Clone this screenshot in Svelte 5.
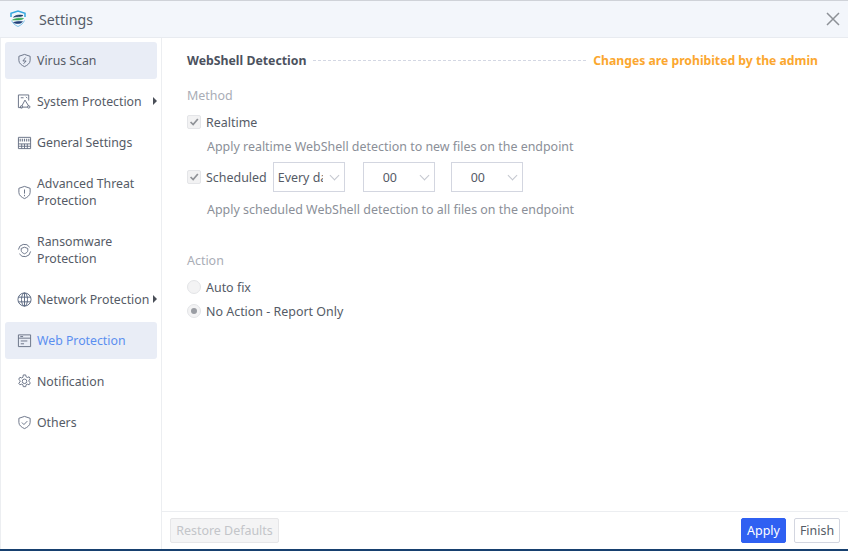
<script lang="ts">
  // Settings dialog, Web Protection page (read-only state)
  const hours = ['00', '00'];
</script>

<div class="win">
  <header class="title">
    <svg class="logo" width="20" height="20" viewBox="0 0 20 20" fill="none" aria-hidden="true">
      <path d="M3 8V4.200L10 2l7 2.200V8" stroke="#35a7e0" stroke-width="1.500" />
      <path d="M3.600 11.500c.8 2.600 3.400 4.700 6.400 6 3-1.300 5.600-3.400 6.400-6" stroke="#7cc4ea" stroke-width="1" />
      <path d="M5.500 8.200C7.500 6 12 5.600 15 6.500c-1.200 1.500-7 .8-9.500 1.700z" fill="#1d3c6a" stroke="#1d3c6a" stroke-width=".6" />
      <path d="M4.500 11c3-2 8.500-2.200 11-1.500-2 2.200-8 1.200-11 1.500z" fill="#35a852" stroke="#35a852" stroke-width=".6" />
      <path d="M5.500 13.500c2.500-1 6-1.200 9-.8-1.800 2.300-6.500 2.300-9 .8z" fill="#1f3f78" stroke="#1f3f78" stroke-width=".6" />
    </svg>
    <span class="title-text">Settings</span>
    <svg class="close" width="14" height="14" viewBox="0 0 14 14" aria-hidden="true">
      <path d="M1 1l12 12M13 1 1 13" stroke="#8d9197" stroke-width="1.500" fill="none" />
    </svg>
  </header>

  <div class="body">
    <nav class="side">
      <div class="item active">
        <svg class="ico" viewBox="0 0 16 16" fill="none"><path d="M8 1.500 14 3.500V8c0 3-3 5.200-6 6.500C5 13.200 2 11 2 8V3.500z" /><path d="M9.200 4.800 6.300 8.500h3.400L7 11.500" /></svg>
        <span>Virus Scan</span>
      </div>
      <div class="item">
        <svg class="ico" viewBox="0 0 16 16" fill="none"><path d="M5 14.500H1.500V1h11v6" /><path d="M4 4h3M9.500 3l1.500 1.500" /><path d="M8.500 6.500 5 13M8.500 6.500l4 6.500M6 14h5" /><circle cx="4.800" cy="13.800" r="1.300" /><circle cx="12.500" cy="13.800" r="1.300" /></svg>
        <span>System Protection</span>
        <i class="caret"></i>
      </div>
      <div class="item">
        <svg class="ico" viewBox="0 0 16 16" fill="none"><path d="M1.500 2.500h13v12h-13z" /><path d="M1.500 5.500h13" stroke-dasharray="1 1" stroke-width="3" /><path d="M1.500 9.500h13M5 9.500v5M8 9.500v5M11 9.500v5M1.500 12h13" /></svg>
        <span>General Settings</span>
      </div>
      <div class="item tall">
        <svg class="ico" viewBox="0 0 16 16" fill="none"><path d="M8 1.500 14 3.500V8c0 3-3 5.200-6 6.500C5 13.200 2 11 2 8V3.500z" /><path d="M8 4.800v4.400M8 10.500v1.500" /></svg>
        <span>Advanced Threat<br />Protection</span>
      </div>
      <div class="item tall">
        <svg class="ico" viewBox="0 0 16 16" fill="none"><path d="M1.500 7A6.500 6.500 0 0 1 13.500 4.500M14.500 9A6.500 6.500 0 0 1 2.500 11.500" /><path d="M8 4.500 11.500 5.800V8c0 1.700-1.700 2.800-3.500 3.500C6.200 10.800 4.500 9.700 4.500 8V5.800z" /></svg>
        <span>Ransomware<br />Protection</span>
      </div>
      <div class="item">
        <svg class="ico globe" viewBox="0 0 16 16" fill="none"><circle cx="8" cy="8" r="7" /><ellipse cx="8" cy="8" rx="3.200" ry="7" /><path d="M8 1v14M1.500 5.500h13M1.500 10.500h13" /></svg>
        <span>Network Protection</span>
        <i class="caret"></i>
      </div>
      <div class="item active on">
        <svg class="ico" viewBox="0 0 16 16" fill="none"><path d="M1.500 2h13v12.500h-13zM1.500 5.500h13" /><path d="M3.500 3.800h3M4 8.500h7M4 11.500h3.500" /></svg>
        <span>Web Protection</span>
      </div>
      <div class="item">
        <svg class="ico" viewBox="0 0 16 16" fill="none"><path d="M6.700 1h2.600l.4 2 1.300.7 1.900-.7 1.300 2.200-1.500 1.300v1.500l1.500 1.300-1.300 2.200-1.900-.7-1.300.7-.4 2H6.700l-.4-2-1.300-.7-1.900.7L1.800 9.800l1.500-1.300V7L1.800 5.700l1.300-2.200 1.900.7 1.300-.7z" /><circle cx="8" cy="7.800" r="2.400" /></svg>
        <span>Notification</span>
      </div>
      <div class="item">
        <svg class="ico" viewBox="0 0 16 16" fill="none"><path d="M8 1.500 14 3.500V8c0 3-3 5.200-6 6.500C5 13.200 2 11 2 8V3.500z" /><path d="M5.200 8l2.200 2.200L11 6.500" /></svg>
        <span>Others</span>
      </div>
    </nav>

    <main class="main">
      <div class="content">
        <div class="head">
          <h2>WebShell Detection</h2>
          <div class="dash"></div>
          <strong class="warn">Changes are prohibited by the admin</strong>
        </div>

        <div class="group-label method">Method</div>
        <div class="row">
          <span class="check"><svg viewBox="0 0 14 14" fill="none"><path d="M3 7l3 3 5.500-6.500" /></svg></span>
          <span class="lab">Realtime</span>
        </div>
        <p class="hint first">Apply realtime WebShell detection to new files on the endpoint</p>
        <div class="row sched">
          <span class="check"><svg viewBox="0 0 14 14" fill="none"><path d="M3 7l3 3 5.500-6.500" /></svg></span>
          <span class="lab">Scheduled</span>
          <div class="sel day"><span class="clip">Every day</span><i class="chev"></i></div>
          {#each hours as h}
            <div class="sel num"><span class="val">{h}</span><i class="chev"></i></div>
          {/each}
        </div>
        <p class="hint second">Apply scheduled WebShell detection to all files on the endpoint</p>

        <div class="group-label action">Action</div>
        <div class="row radio-row">
          <span class="radio"></span>
          <span class="lab">Auto fix</span>
        </div>
        <div class="row radio-row next">
          <span class="radio sel-on"></span>
          <span class="lab">No Action - Report Only</span>
        </div>
      </div>

      <footer class="foot">
        <button class="btn restore" disabled>Restore Defaults</button>
        <button class="btn apply">Apply</button>
        <button class="btn finish">Finish</button>
      </footer>
    </main>
  </div>
</div>

<style>
  :global(body) {
    margin: 0;
    background: #fff;
  }
  .win {
    width: 848px;
    height: 551px;
    box-sizing: border-box;
    display: flex;
    flex-direction: column;
    border-top: 1px solid #cfd2d8;
    border-bottom: 2px solid #17406f;
    font-family: "Noto Sans", "Open Sans", sans-serif;
    font-size: 12.45px;
    color: #555b66;
    overflow: hidden;
  }
  .title {
    height: 37px;
    box-sizing: border-box;
    flex: none;
    display: flex;
    align-items: center;
    padding-left: 8px;
    background: #f3f6fb;
    border-bottom: 1px solid #e8ebf0;
  }
  .title-text {
    margin-left: 11px;
    font-size: 14.2px;
    color: #565c68;
  }
  .close {
    margin-left: auto;
    margin-right: 8px;
  }
  .body {
    flex: 1;
    display: flex;
    min-height: 0;
  }
  .side {
    width: 162px;
    box-sizing: border-box;
    flex: none;
    padding: 4px 4px 0 5px;
    display: flex;
    flex-direction: column;
    gap: 4px;
    border-left: 1px solid #eceef1;
    border-right: 1px solid #eceef1;
    font-size: 12.3px;
  }
  .item {
    position: relative;
    height: 37px;
    flex: none;
    display: flex;
    align-items: center;
    gap: 5px;
    padding-left: 12px;
    border-radius: 3px;
    margin-left: -1px;
    line-height: 17px;
  }
  .item.tall {
    height: 54px;
  }
  .item.active {
    background: #e9edf6;
  }
  .item.on {
    color: #5b8ff0;
  }
  .ico {
    width: 15px;
    height: 15px;
    flex: none;
    stroke: #667084;
    stroke-width: 1;
  }
  .globe {
    stroke: #5a6880;
  }
  .caret {
    position: absolute;
    right: 0;
    top: 14px;
    border-left: 4px solid #4a4f58;
    border-top: 4px solid transparent;
    border-bottom: 4px solid transparent;
  }
  .main {
    flex: 1;
    min-width: 0;
    display: flex;
    flex-direction: column;
  }
  .content {
    flex: 1;
    padding: 13px 30px 0 25px;
  }
  .head {
    display: flex;
    align-items: center;
    height: 18px;
  }
  h2 {
    margin: 0;
    font-size: 12.3px;
    font-weight: 700;
    color: #4c525e;
  }
  .dash {
    flex: 1;
    margin: 0 7px;
    border-top: 1px dashed #d3d7e3;
  }
  .warn {
    font-size: 12.2px;
    color: #fba72f;
    font-weight: 700;
  }
  .group-label {
    color: #a9adb6;
    line-height: 18px;
  }
  .method {
    margin-top: 18px;
  }
  .row {
    display: flex;
    align-items: center;
  }
  .row:not(.radio-row):not(.sched) {
    margin-top: 8px;
    height: 18px;
  }
  .check {
    width: 14px;
    height: 14px;
    box-sizing: border-box;
    flex: none;
    background: #f2f2f3;
    border: 1px solid #e4e5e8;
    border-radius: 2px;
  }
  .check svg {
    display: block;
    width: 12px;
    height: 12px;
    stroke: #8f9297;
    stroke-width: 2;
  }
  .lab {
    margin-left: 5px;
    color: #555b66;
  }
  .hint {
    margin: 0;
    padding-left: 20px;
    color: #8b8f98;
    line-height: 18px;
  }
  .hint.first {
    margin-top: 7px;
  }
  .hint.second {
    margin-top: 9px;
  }
  .sched {
    margin-top: 6px;
    height: 30px;
  }
  .sel {
    position: relative;
    box-sizing: border-box;
    width: 72px;
    height: 30px;
    border: 1px solid #d3d6e0;
    display: flex;
    align-items: center;
    color: #555b66;
    background: #fff;
  }
  .day {
    margin-left: 6px;
    padding-left: 4px;
  }
  .num {
    margin-left: 18px;
  }
  .num + .num {
    margin-left: 16px;
  }
  .clip {
    width: 45px;
    overflow: hidden;
    white-space: nowrap;
  }
  .val {
    margin-left: 19px;
  }
  .chev {
    position: absolute;
    right: 6px;
    top: 9px;
    width: 6px;
    height: 6px;
    border-right: 1px solid #c4c7cf;
    border-bottom: 1px solid #c4c7cf;
    transform: rotate(45deg);
  }
  .action {
    margin-top: 33px;
  }
  .radio-row {
    margin-top: 8px;
    height: 18px;
  }
  .radio-row.next {
    margin-top: 6px;
  }
  .radio {
    width: 14px;
    height: 14px;
    box-sizing: border-box;
    flex: none;
    border-radius: 50%;
    background: #f3f3f4;
    border: 1px solid #e3e4e7;
    display: grid;
    place-items: center;
  }
  .radio.sel-on::after {
    content: "";
    width: 6px;
    height: 6px;
    border-radius: 50%;
    background: #9a9da3;
  }
  .foot {
    height: 38px;
    flex: none;
    box-sizing: border-box;
    display: flex;
    align-items: center;
    padding: 0 8px;
    border-top: 1px solid #eceef1;
  }
  .btn {
    font: inherit;
    height: 25px;
    box-sizing: border-box;
    border-radius: 2px;
    padding: 0;
  }
  .restore {
    width: 109px;
    background: #f4f4f5;
    border: 1px solid #e6e6e8;
    color: #c3c5c9;
  }
  .apply {
    margin-left: auto;
    width: 45px;
    background: #2f60f2;
    border: 1px solid #2f60f2;
    color: #fff;
  }
  .finish {
    margin-left: 8px;
    width: 46px;
    background: #fff;
    border: 1px solid #d3d6e0;
    color: #555b66;
  }
</style>
